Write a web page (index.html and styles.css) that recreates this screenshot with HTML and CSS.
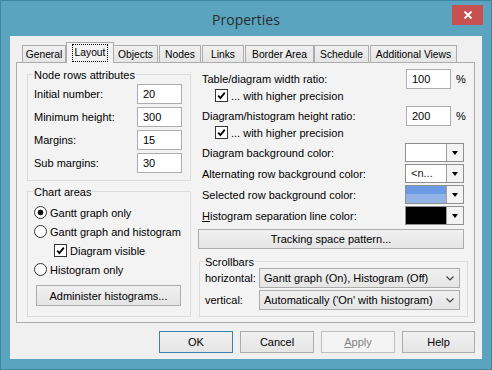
FILE: index.html
```html
<!DOCTYPE html>
<html lang="en">
<head>
  <meta charset="UTF-8">
  <title>Properties</title>
  <link rel="stylesheet" href="styles.css">
</head>
<body>

  <div class="window">
    <div class="titlebar">
      <span class="title">Properties</span>
      <span class="close">
        <svg width="10" height="10" viewBox="0 0 10 10"><path d="M1.5 1.5 L8.5 8.5 M8.5 1.5 L1.5 8.5" stroke="#fff" stroke-width="1.8"/></svg>
      </span>
    </div>

    <div class="dialog">
      <div class="tabs">
        <div class="tab t-general">General</div>
        <div class="tab active t-layout"><span class="focus">Layout</span></div>
        <div class="tab t-objects">Objects</div>
        <div class="tab t-nodes">Nodes</div>
        <div class="tab t-links">Links</div>
        <div class="tab t-border">Border Area</div>
        <div class="tab t-schedule">Schedule</div>
        <div class="tab t-views">Additional Views</div>
      </div>

      <div class="page">
        <div class="col-left">
          <div class="group nodes">
            <div class="group-title">Node rows attributes</div>
            <div class="field-rows">
              <div class="field"><span>Initial number:</span><span class="edit">20</span></div>
              <div class="field"><span>Minimum height:</span><span class="edit">300</span></div>
              <div class="field"><span>Margins:</span><span class="edit">15</span></div>
              <div class="field"><span>Sub margins:</span><span class="edit">30</span></div>
            </div>
          </div>

          <div class="group charts">
            <div class="group-title">Chart areas</div>
            <div class="option-rows">
              <div class="option"><span class="radio on"></span>Gantt graph only</div>
              <div class="option"><span class="radio"></span>Gantt graph and histogram</div>
              <div class="option sub"><span class="box"><svg width="9" height="9" viewBox="0 0 9 9"><path d="M1.2 4.6 L3.4 7 L7.8 1.6" fill="none" stroke="#000" stroke-width="1.8"/></svg></span>Diagram visible</div>
              <div class="option"><span class="radio"></span>Histogram only</div>
            </div>
            <div class="btn admin">Administer histograms...</div>
          </div>
        </div>

        <div class="col-right">
          <div class="ratio">
            <span class="lbl">Table/diagram width ratio:</span>
            <span class="edit">100</span>
            <span class="pct">%</span>
          </div>
          <div class="option precision"><span class="box"><svg width="9" height="9" viewBox="0 0 9 9"><path d="M1.2 4.6 L3.4 7 L7.8 1.6" fill="none" stroke="#000" stroke-width="1.8"/></svg></span>... with higher precision</div>
          <div class="ratio">
            <span class="lbl">Diagram/histogram height ratio:</span>
            <span class="edit">200</span>
            <span class="pct">%</span>
          </div>
          <div class="option precision"><span class="box"><svg width="9" height="9" viewBox="0 0 9 9"><path d="M1.2 4.6 L3.4 7 L7.8 1.6" fill="none" stroke="#000" stroke-width="1.8"/></svg></span>... with higher precision</div>

          <div class="colors">
            <div class="color-row">
              <span class="lbl">Diagram background color:</span>
              <span class="combo"><span class="swatch white"></span><span class="drop"><i></i></span></span>
            </div>
            <div class="color-row">
              <span class="lbl">Alternating row background color:</span>
              <span class="combo"><span class="swatch white">&lt;n...</span><span class="drop"><i></i></span></span>
            </div>
            <div class="color-row">
              <span class="lbl">Selected row background color:</span>
              <span class="combo"><span class="swatch blue"></span><span class="drop"><i></i></span></span>
            </div>
            <div class="color-row">
              <span class="lbl"><u>H</u>istogram separation line color:</span>
              <span class="combo"><span class="swatch black"></span><span class="drop"><i></i></span></span>
            </div>
          </div>

          <div class="btn tracking">Tracking space pattern...</div>

          <div class="group scrollbars">
            <div class="group-title">Scrollbars</div>
            <div class="scroll-grid">
              <span>horizontal:</span>
              <span class="select">Gantt graph (On), Histogram (Off)
                <svg width="8" height="5" viewBox="0 0 8 5"><path d="M0.5 0.5 L4 4 L7.5 0.5" fill="none" stroke="#444" stroke-width="1.2"/></svg>
              </span>
              <span>vertical:</span>
              <span class="select">Automatically ('On' with histogram)
                <svg width="8" height="5" viewBox="0 0 8 5"><path d="M0.5 0.5 L4 4 L7.5 0.5" fill="none" stroke="#444" stroke-width="1.2"/></svg>
              </span>
            </div>
          </div>
        </div>
      </div>

      <div class="buttons">
        <div class="btn default">OK</div>
        <div class="btn">Cancel</div>
        <div class="btn disabled"><u>A</u>pply</div>
        <div class="btn help">Help</div>
      </div>
    </div>
  </div>

</body>
</html>
```

FILE: styles.css
```css
body {
  margin: 0;
  font-family: 'Liberation Sans', Arial, sans-serif;
  font-size: 11px;
  color: #000;
}

.window {
  width: 492px;
  height: 370px;
  box-sizing: border-box;
  border: 1px solid #3f86a1;
  background: #5aa4bf;
  padding: 0 9px 10px 9px;
  display: flex;
  flex-direction: column;
}

.titlebar {
  height: 35px;
  display: grid;
  grid-template-columns: 1fr auto 1fr;
  align-items: start;
}

.title {
  grid-column: 2;
  font-family: 'Open Sans', sans-serif;
  font-size: 14px;
  color: #2b2b2b;
  line-height: 35px;
  padding-top: 1px;
}

.close {
  grid-column: 3;
  justify-self: end;
  margin-top: 4px;
  margin-right: -1px;
  width: 31px;
  height: 20px;
  background: #c75050;
  display: flex;
  align-items: center;
  justify-content: center;
}

.dialog {
  flex: 1;
  background: #f0f0f0;
  padding: 6px 7px 6px 6px;
  display: flex;
  flex-direction: column;
}

/* tabs */
.tabs {
  display: flex;
  align-items: flex-end;
  height: 20px;
  padding-left: 6px;
}

.tab {
  height: 17px;
  box-sizing: border-box;
  border: 1px solid #acacac;
  border-bottom: none;
  background: linear-gradient(#f0f0f0, #e5e5e5);
  display: flex;
  align-items: center;
  justify-content: center;
  font-size: 10.3px;
  margin-left: 1px;
}

.tab.active {
  height: 21px;
  margin-bottom: -1px;
  background: #f3f3f3;
  position: relative;
  z-index: 1;
}

.focus {
  outline: 1px dotted #000;
  padding: 1px 2px;
  line-height: 14px;
}

.t-general { width: 44px; margin-left: 0; }
.t-layout { width: 48px; margin-left: 0; }
.t-objects { width: 45px; margin-left: -1px; }
.t-nodes { width: 42px; }
.t-links { width: 42px; }
.t-border { width: 69px; }
.t-schedule { width: 55px; margin-left: 0; }
.t-views { width: 87px; }

/* page */
.page {
  border: 1px solid #acacac;
  background: #f3f3f3;
  display: flex;
  gap: 7px;
  padding: 0 6px 5px 10px;
}

.col-left {
  width: 164px;
  padding-top: 11px;
  display: flex;
  flex-direction: column;
}

.col-right {
  width: 270px;
  padding-top: 6px;
  display: flex;
  flex-direction: column;
}

.group {
  border: 1px solid #dcdcdc;
  padding: 0 8px 7px 6px;
}

.group-title {
  display: table;
  margin: -7px 0 0 -1px;
  padding: 0 1px;
  line-height: 14px;
  background: #f3f3f3;
}

.field-rows {
  margin-top: 2px;
  display: flex;
  flex-direction: column;
  gap: 3px;
}

.field {
  height: 20px;
  display: flex;
  align-items: center;
  justify-content: space-between;
}

.edit {
  width: 45px;
  height: 20px;
  box-sizing: border-box;
  border: 1px solid #abadb3;
  background: #fff;
  padding: 0 5px;
  display: flex;
  align-items: center;
}

.charts {
  margin-top: 10px;
  padding-bottom: 10px;
}

.option-rows {
  margin-top: 4px;
}

.option {
  height: 19px;
  display: flex;
  align-items: center;
  gap: 3px;
}

.option.sub {
  padding-left: 20px;
}

.radio {
  width: 13px;
  height: 13px;
  box-sizing: border-box;
  border: 1px solid #333;
  border-radius: 50%;
  background: #fff;
}

.radio.on {
  background: radial-gradient(circle, #111 0 2.6px, #fff 3.2px);
}

.box {
  width: 13px;
  height: 13px;
  box-sizing: border-box;
  border: 1px solid #333;
  background: #fff;
  display: flex;
  align-items: center;
  justify-content: center;
}

.btn {
  height: 22px;
  box-sizing: border-box;
  border: 1px solid #acacac;
  background: linear-gradient(#f0f0f0, #e5e5e5);
  display: flex;
  align-items: center;
  justify-content: center;
}

.admin {
  margin: 6px 0 0 2px;
  width: 145px;
  height: 21px;
}

/* right column */
.ratio {
  height: 20px;
  display: flex;
  align-items: center;
}

.lbl {
  flex: 1;
  padding-left: 4px;
}

.pct {
  width: 17px;
  box-sizing: border-box;
  padding-left: 5px;
}

.precision {
  height: 13px;
  padding-left: 17px;
  margin-bottom: 4px;
}

.colors {
  display: flex;
  flex-direction: column;
  gap: 2px;
}

.color-row {
  height: 19px;
  display: flex;
  align-items: center;
}

.combo {
  width: 59px;
  height: 19px;
  box-sizing: border-box;
  margin-right: 4px;
  border: 1px solid #8e8f8f;
  background: #fff;
  display: flex;
}

.swatch {
  flex: 1;
  padding-left: 5px;
  line-height: 17px;
  color: #222;
}

.swatch.blue {
  background: linear-gradient(#6c9be6 50%, #93b2e6 50%);
}

.swatch.black {
  background: #000;
}

.drop {
  width: 16px;
  background: #f3f3f3;
  border-left: 1px solid #a0a0a0;
  display: flex;
  align-items: center;
  justify-content: center;
}

.drop i {
  border-left: 3.5px solid transparent;
  border-right: 3.5px solid transparent;
  border-top: 4px solid #000;
}

.tracking {
  margin: 4px 4px 0 0;
  height: 20px;
}

.scrollbars {
  margin: 12px 0 0 1px;
  padding: 0 7px 6px 5px;
}

.scrollbars .group-title {
  margin-bottom: -1px;
}

.scroll-grid {
  display: grid;
  grid-template-columns: 54px 1fr;
  row-gap: 2px;
  align-items: center;
}

.select {
  height: 20px;
  box-sizing: border-box;
  border: 1px solid #acacac;
  background: linear-gradient(#f0f0f0, #e5e5e5);
  padding: 0 5px 0 4px;
  display: flex;
  align-items: center;
  justify-content: space-between;
}

/* bottom buttons */
.buttons {
  margin-top: 8px;
  display: flex;
  justify-content: flex-end;
  gap: 7px;
}

.buttons .btn {
  width: 74px;
}

.buttons .help {
  width: 73px;
}

.btn.default {
  border-color: #3c7fb1;
}

.btn.disabled {
  border-color: #bfbfbf;
  background: #f4f4f4;
  color: #838383;
}
```
